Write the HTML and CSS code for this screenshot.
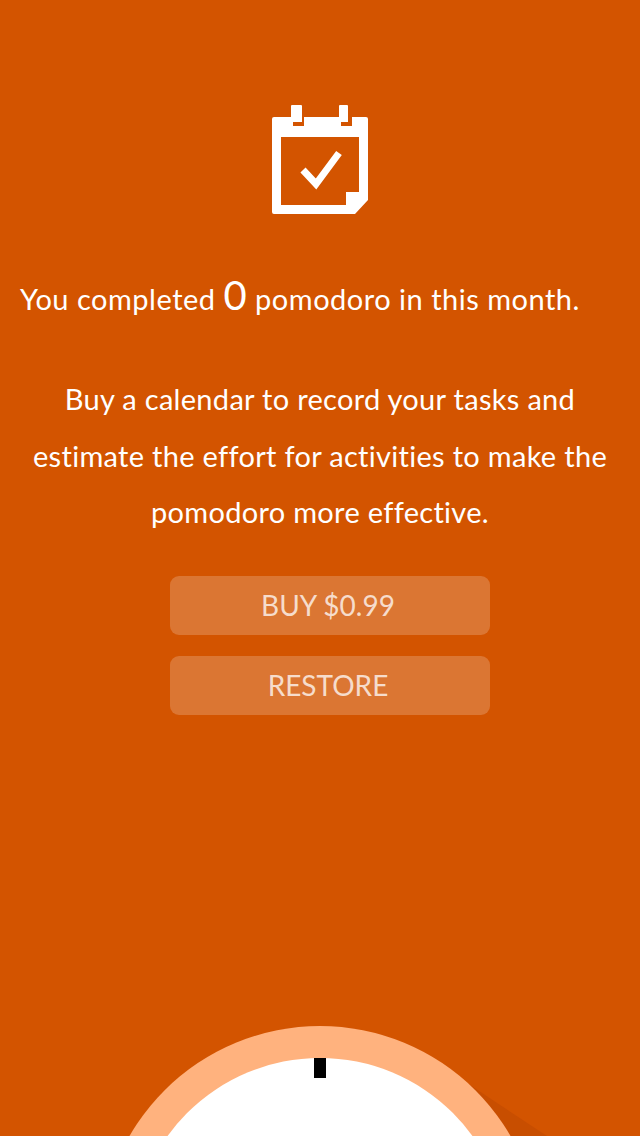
FILE: index.html
```html
<!DOCTYPE html>
<html lang="en">
<head>
    <meta charset="UTF-8">
    <meta name="viewport" content="width=device-width, initial-scale=1.0">
    <title>Pomodoro</title>
    <link rel="stylesheet" href="styles.css">
</head>
<body>
    <div class="screen">
        <svg class="calendar-icon" width="96" height="110" viewBox="0 0 96 110">
            <path fill="#fff" fill-rule="evenodd" d="M2 12H19V1Q19 0 20 0H29Q30 0 30 1V17H21V21H32V12H67V1Q67 0 68 0H75Q76 0 76 1V17H69V21H80V12H94Q96 12 96 14V95L83 109H2Q0 109 0 107V14Q0 12 2 12ZM9 32V100H74V87H87V32Z"/>
            <path fill="none" stroke="#fff" stroke-width="7" d="M31 65L44 79L67 48"/>
        </svg>
        <p class="summary">You completed <span class="count">0</span> pomodoro in this month.</p>
        <p class="pitch">Buy a calendar to record your tasks and estimate the effort for activities to make the pomodoro more effective.</p>
        <div class="actions">
            <button class="action">BUY $0.99</button>
            <button class="action">RESTORE</button>
        </div>
        <svg class="dial" width="640" height="110" viewBox="0 0 640 110">
            <path fill="#c84e00" d="M455 49L547 110H420Z"/>
            <circle cx="320" cy="220" r="220" fill="#ffb27e"/>
            <circle cx="320" cy="220" r="188" fill="#fff"/>
            <rect x="314" y="32" width="12" height="20" fill="#000"/>
        </svg>
    </div>
</body>
</html>
```
FILE: styles.css
```css
body {
    margin: 0;
    background-color: #d35400;
    color: #fff;
    font-family: Lato, "Open Sans", sans-serif;
    font-variant-ligatures: none;
}
.screen {
    display: flex;
    flex-direction: column;
    height: 1136px;
    overflow: hidden;
}
.calendar-icon {
    align-self: center;
    margin-top: 105px;
    flex: none;
}
.summary {
    margin: 56px 0 0;
    padding-left: 20px;
    font-size: 29px;
    line-height: 56px;
    letter-spacing: 0.5px;
    white-space: nowrap;
}
.count {
    font-size: 40px;
    line-height: 40px;
}
.pitch {
    margin: 44px 20px 0;
    font-size: 29px;
    line-height: 56.500px;
    letter-spacing: 0.3px;
    text-align: center;
}
.actions {
    display: flex;
    flex-direction: column;
    gap: 21px;
    align-items: center;
    margin: 35px 0 0 20px;
}
.action {
    width: 320px;
    height: 59px;
    padding: 0 4px 1px 0;
    border: none;
    border-radius: 9px;
    background: rgba(255, 255, 255, 0.2);
    color: rgba(255, 255, 255, 0.75);
    font-family: inherit;
    font-size: 28px;
}
.dial {
    margin-top: auto;
    flex: none;
}
```
